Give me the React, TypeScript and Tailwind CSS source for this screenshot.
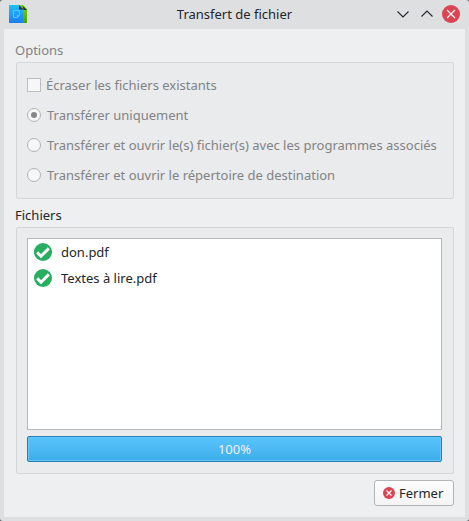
import type { ReactNode } from "react";

function AppIcon() {
  return (
    <svg width="18" height="18" viewBox="0 0 18 18" className="ml-[9px] shrink-0">
      <defs>
        <linearGradient id="blue" x1="0" y1="0" x2="0" y2="1">
          <stop offset="0" stopColor="#1cc0fb" />
          <stop offset="1" stopColor="#1d7cf1" />
        </linearGradient>
        <linearGradient id="green" x1="0" y1="0" x2="0" y2="1">
          <stop offset="0" stopColor="#7fd608" />
          <stop offset="1" stopColor="#43a306" />
        </linearGradient>
      </defs>
      <path d="M10 0h4l4 4v14h-6z" fill="url(#green)" />
      <path d="M0 0h10l4 4v14H0z" fill="url(#blue)" />
      <path d="M10 0l4.500 4.500h-4.500zM13.500 0.500l4.500 4.500h-3.500z" fill="#263238" />
      <path d="M4.500 5.500h6v4.500l-2 2.500h-4z" fill="none" stroke="#5ec8fc" strokeWidth="0.9" />
      <path d="M8 10h2.500l-2.500 2.500z" fill="#5ec8fc" />
    </svg>
  );
}

function CheckIcon() {
  return (
    <svg width="18" height="18" viewBox="0 0 18 18" className="shrink-0">
      <circle cx="9" cy="9" r="9" fill="#27ae60" />
      <path d="M3.200 9.400l3.800 3.800 7.800-7.800" fill="none" stroke="#fff" strokeWidth="2.900" />
    </svg>
  );
}

function Radio({ checked = false, children }: { checked?: boolean; children: ReactNode }) {
  return (
    <div className="flex h-[30px] items-center">
      <span className="flex size-[14px] shrink-0 items-center justify-center rounded-full border border-[#b2b3b4] bg-[#f7f7f8]">
        {checked && <span className="size-[6px] rounded-full bg-[#858687]" />}
      </span>
      <span className="ml-[6px] whitespace-nowrap">{children}</span>
    </div>
  );
}

function FileRow({ name }: { name: string }) {
  return (
    <div className="flex h-[26px] items-center pl-[6px]">
      <CheckIcon />
      <span className="ml-[9px]">{name}</span>
    </div>
  );
}

export default function App() {
  return (
    <div className="bg-[#63666a]">
      <div className="flex h-[521px] w-[469px] flex-col rounded-[3px] bg-[#dedfe1] px-1 pb-1 font-['Noto_Sans',sans-serif] text-[13px] leading-[18px] text-[#232629]">
        <header className="-mx-1 flex h-[29px] shrink-0 items-center pb-px">
          <AppIcon />
          <h1 className="flex-1 pl-[54px] text-center">Transfert de fichier</h1>
          <svg width="81" height="20" viewBox="0 0 81 20" fill="none" className="shrink-0">
            <path d="M9.500 7.500L15 13l5.500-5.500M33.500 12.500L39 7l5.500 5.500" stroke="#232629" strokeWidth="1.1" />
            <circle cx="63" cy="10" r="9" fill="#da4453" />
            <path d="M59 6l8 8m0-8l-8 8" stroke="#fff" strokeWidth="1.1" />
          </svg>
        </header>
        <main className="flex-1 bg-[#eeeff1] pl-3 pr-[11px] pt-3">
          <h2 className="-ml-px h-[21px] text-[#818384]">Options</h2>
          <section className="h-[137px] rounded-[2px] border border-[#d5d6d8] bg-[#eaebed] pl-[10px] pt-[7px] text-[#818384]">
            <div className="flex h-[30px] items-center">
              <span className="size-[14px] shrink-0 border border-[#bdbec0] bg-[#f7f7f8]" />
              <span className="ml-[5px]">Écraser les fichiers existants</span>
            </div>
            <Radio checked>Transférer uniquement</Radio>
            <Radio>Transférer et ouvrir le(s) fichier(s) avec les programmes associés</Radio>
            <Radio>Transférer et ouvrir le répertoire de destination</Radio>
          </section>
          <h2 className="-ml-px mt-[7px] h-[21px]">Fichiers</h2>
          <section className="h-[247px] rounded-[2px] border border-[#d5d6d8] bg-[#eaebed] pl-[10px] pr-[11px] pt-[10px]">
            <div className="h-[192px] border border-[#b7b8b9] bg-white">
              <FileRow name="don.pdf" />
              <FileRow name="Textes à lire.pdf" />
            </div>
            <div className="mt-[6px] flex h-[26px] items-center justify-center rounded-[2px] border border-[#2980b0] bg-linear-to-b from-[#58c4fd] to-[#3daee9] text-[#eff0f1] shadow-[inset_0_0_0_1px_#65c5f8]">
              100%
            </div>
          </section>
          <div className="mt-[6px] flex justify-end">
            <button className="flex h-[26px] w-[80px] items-center rounded-[3px] border border-[#b2b3b4] bg-linear-to-b from-[#fcfcfc] to-[#f4f4f5] pl-2">
              <svg width="12" height="12" viewBox="0 0 12 12" className="shrink-0">
                <circle cx="6" cy="6" r="6" fill="#da4453" />
                <path d="M3.500 3.500l5 5m0-5l-5 5" stroke="#fff" strokeWidth="1.1" />
              </svg>
              <span className="ml-1">Fermer</span>
            </button>
          </div>
        </main>
      </div>
    </div>
  );
}
